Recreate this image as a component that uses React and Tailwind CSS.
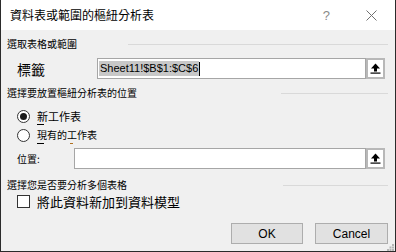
const cjk = { fontFamily: '"Noto Sans CJK TC", "Noto Sans", sans-serif' };
const lat = { fontFamily: '"Liberation Sans", "Noto Sans CJK TC", sans-serif' };

function UpIcon() {
  return (
    <svg width="11" height="11" viewBox="0 0 11 11">
      <polygon points="5.5,0.5 10,5.5 1,5.5" fill="#000" />
      <rect x="4" y="5" width="3" height="3.5" fill="#000" />
      <rect x="0.5" y="9.5" width="10" height="1.2" fill="#000" />
    </svg>
  );
}

function Heading({ children, line }) {
  return (
    <div className="flex items-center h-[14px] pr-[7px]">
      <span className="text-[10px] leading-none text-black whitespace-nowrap" style={cjk}>{children}</span>
      <div className={`ml-auto h-px bg-[#d9d9d9] ${line}`} />
    </div>
  );
}

function RefInput({ children, left }) {
  return (
    <div className="flex items-stretch h-[21px]">
      <div className={`flex-1 flex items-center bg-white border border-[#a6a6a6] ${left}`}>{children}</div>
      <div className="w-[19px] flex items-center justify-center bg-white border-2 border-[#b8b8b8]">
        <UpIcon />
      </div>
    </div>
  );
}

export default function App() {
  return (
    <div className="w-[396px] h-[252px] flex flex-col bg-[#f0f0f0] border-x border-b border-[#2b2b2b] overflow-hidden select-none">
      <div className="h-[30px] bg-white flex items-center pl-[9px] pr-[18px] shrink-0">
        <span className="text-[12px] leading-none text-black" style={cjk}>資料表或範圍的樞紐分析表</span>
        <span className="ml-auto text-[13px] leading-none text-[#8a8a8a]" style={lat}>?</span>
        <svg className="ml-[36px]" width="11" height="11" viewBox="0 0 11 11">
          <path d="M0.5 0.5 L10.5 10.5 M10.5 0.5 L0.5 10.5" stroke="#707070" strokeWidth="1" />
        </svg>
      </div>
      <div className="flex-1 flex flex-col pl-[6px]">
        <div className="mt-[7px]">
          <Heading line="w-[260px]">選取表格或範圍</Heading>
        </div>
        <div className="mt-[7px] flex items-center pr-[10px]">
          <span className="w-[90px] pl-[10px] text-[14px] leading-none text-black" style={cjk}>標籤</span>
          <div className="flex-1">
            <RefInput left="pl-[1px]">
              <span className="text-[11px] leading-[15px] bg-[#c8c8c8] text-black px-[1px]" style={lat}>Sheet11!$B$1:$C$6</span>
              <span className="w-px h-[14px] bg-black" />
            </RefInput>
          </div>
        </div>
        <div className="mt-[7px]">
          <Heading line="w-[107px]">選擇要放置樞紐分析表的位置</Heading>
        </div>
        <div className="mt-[9px] flex items-center h-[14px] pl-[10px]">
          <div className="w-[13px] h-[13px] rounded-full border border-[#333] bg-white flex items-center justify-center">
            <div className="w-[7px] h-[7px] rounded-full bg-[#1a1a1a]" />
          </div>
          <span className="relative ml-[7px] text-[11px] leading-none text-black" style={cjk}>
            新工作表
            <span className="absolute left-0 top-[13px] w-[7px] h-px bg-black" />
          </span>
        </div>
        <div className="mt-[5px] flex items-center h-[14px] pl-[10px]">
          <div className="w-[13px] h-[13px] rounded-full border border-[#333] bg-white" />
          <span className="relative ml-[7px] text-[10px] leading-none text-black" style={cjk}>
            現有的工作表
            <span className="absolute left-0 top-[13px] w-[7px] h-px bg-black" />
            <span className="absolute left-[33px] top-[13px] w-[3px] h-px bg-[#b07020]" />
          </span>
        </div>
        <div className="mt-[6px] flex items-center pr-[10px]">
          <span className="w-[67px] pl-[10px] text-[10px] leading-none text-black" style={cjk}>位置:</span>
          <div className="flex-1">
            <RefInput left="" />
          </div>
        </div>
        <div className="mt-[9px]">
          <Heading line="w-[105px]">選擇您是否要分析多個表格</Heading>
        </div>
        <div className="mt-[2px] flex items-center h-[14px] pl-[10px]">
          <div className="w-[13px] h-[13px] border border-[#333] bg-white" />
          <span className="ml-[7px] text-[13px] leading-none text-black" style={cjk}>將此資料新加到資料模型</span>
        </div>
        <div className="mt-[15px] flex justify-end gap-[12px] pr-[7px]">
          <button className="w-[72px] h-[21px] bg-[#e1e1e1] border border-[#adadad] text-[12px] leading-none text-black" style={lat}>OK</button>
          <button className="w-[73px] h-[21px] bg-[#e1e1e1] border border-[#adadad] text-[12px] leading-none text-black" style={lat}>Cancel</button>
        </div>
        <div className="flex-1 flex justify-end items-end pr-[1px] pb-[1px]">
          <svg width="7" height="7" viewBox="0 0 7 7">
            <rect x="5" y="0" width="2" height="2" fill="#b5b5b5" />
            <rect x="2.5" y="2.5" width="2" height="2" fill="#b5b5b5" />
            <rect x="5" y="2.5" width="2" height="2" fill="#b5b5b5" />
            <rect x="0" y="5" width="2" height="2" fill="#b5b5b5" />
            <rect x="2.5" y="5" width="2" height="2" fill="#b5b5b5" />
            <rect x="5" y="5" width="2" height="2" fill="#b5b5b5" />
          </svg>
        </div>
      </div>
    </div>
  );
}
